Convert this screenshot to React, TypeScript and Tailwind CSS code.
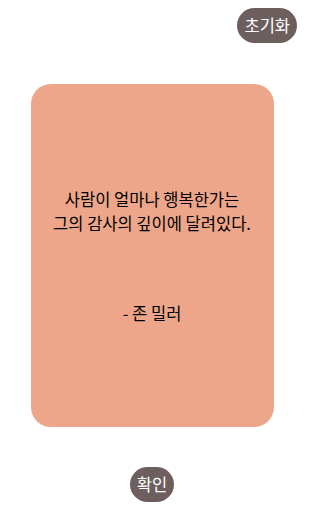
import React from "react";

export default function App() {
  return (
    <div
      className="w-[304px] h-[512px] bg-white flex flex-col"
      style={{ fontFamily: '"Noto Sans CJK KR", "Noto Sans", sans-serif' }}
    >
      <div className="flex justify-end pt-[8px] pr-[7px]">
        <button className="h-[35px] px-[7px] rounded-full bg-[#6e5f5f] text-white text-[16.5px] leading-[35px]">
          초기화
        </button>
      </div>
      <div className="mt-[41px] self-center w-[243px] h-[343px] rounded-[20px] bg-[#eda68a] flex flex-col items-center justify-center text-black">
        <div className="text-center text-[16.5px] leading-[24px]">
          사람이 얼마나 행복한가는
          <br />
          그의 감사의 깊이에 달려있다.
        </div>
        <div className="mt-[66px] text-[16.5px] leading-[24px]">- 존 밀러</div>
      </div>
      <div className="mt-[40px] flex justify-center">
        <button className="h-[35px] px-[7px] rounded-full bg-[#6e5f5f] text-white text-[16.5px] leading-[35px]">
          확인
        </button>
      </div>
    </div>
  );
}
